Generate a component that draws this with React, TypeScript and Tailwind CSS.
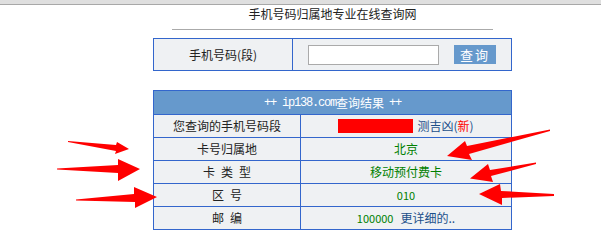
import React from "react";

const Row = ({ label, children }: { label: React.ReactNode; children: React.ReactNode }) => (
  <div className="grid h-[23px] grid-cols-[147px_1fr] border-t border-[#3366cc]">
    <div className="flex items-center justify-center border-r border-[#3366cc] text-[#222]">{label}</div>
    <div className="flex items-center justify-center">{children}</div>
  </div>
);

export default function App() {
  return (
    <div className="relative h-[245px] w-[601px] overflow-hidden bg-white font-['Noto_Sans_CJK_SC',sans-serif] text-[12px] leading-none">
      <div className="h-[5px] border-b border-[#a8a8a8] bg-[#dfdfdf]" />
      <div className="ml-[153px] w-[359px]">
        <div className="h-[18px] text-center leading-[18px] text-[#222]">手机号码归属地专业在线查询网</div>
        <div className="mx-auto mt-[6px] h-px w-[321px] bg-[#aaaaaa]" />

        <div className="mt-[8px] grid h-[33px] grid-cols-[139px_1fr] border border-[#3366cc] bg-[#eff1f3]">
          <div className="flex items-center justify-center border-r border-[#3366cc] text-[#222]">
            手机号码(段)
          </div>
          <div className="flex items-center justify-center gap-[15px]">
            <input
              type="text"
              className="h-[20px] w-[131px] border border-[#aaaaaa] bg-white outline-none"
            />
            <button className="flex h-[19px] w-[42px] items-center justify-center bg-[#6699cc] text-[13px] tracking-[2px] text-white">
              查询
            </button>
          </div>
        </div>

        <div className="mt-[19px] border border-[#3366cc] bg-[#eff1f3]">
          <div className="flex h-[23px] items-center justify-center bg-[#6699cc] text-white">
            <span className="font-['Liberation_Mono',monospace] text-[12px] tracking-[-1.2px]">++ ip138.com</span>
            <span>查询结果</span>
            <span className="ml-[5px] font-['Liberation_Mono',monospace] text-[12px] tracking-[-1.2px]">++</span>
          </div>
          <Row label="您查询的手机号码段">
            <span className="h-[14px] w-[75px] bg-[#ff0000]" />
            <span className="ml-[4px] text-[#1b4f8a]">
              测吉凶(<span className="text-[#ff0000]">新</span>)
            </span>
          </Row>
          <Row label="卡号归属地">
            <span className="text-[#008000]">北京</span>
          </Row>
          <Row label={"卡\u2002类\u2002型"}>
            <span className="text-[#008000]">移动预付费卡</span>
          </Row>
          <Row label={"区\u2002号"}>
            <span className="text-[11px] text-[#008000]">010</span>
          </Row>
          <Row label={"邮\u2002编"}>
            <span className="text-[11px] text-[#008000]">100000</span>
            <span className="ml-[7px] text-[#1b4f8a]">更详细的..</span>
          </Row>
        </div>
      </div>

      <svg
        className="pointer-events-none absolute left-0 top-0"
        width="601"
        height="245"
        viewBox="0 0 601 245"
      >
        <g fill="#ff0000">
          <polygon points="68,141 116,145 117,142 129,149 115,154 116,151 68,142" />
          <polygon points="57,168.5 118,165 118,159 140,169 118,181 118,173 57,169.5" />
          <polygon points="76,199.5 134,194 134,187 157,197 135,208 135,202 76,200.5" />
          <polygon points="550,129.5 467,146 465,141 447,156 472,160 469,154 550,131" />
          <polygon points="536,162.5 490,170 488,164 470,178.5 493,182 491,176 536,164" />
          <polygon points="554,194 501,191 500,184 479,194 502,205 502,198 554,196" />
        </g>
      </svg>
    </div>
  );
}
